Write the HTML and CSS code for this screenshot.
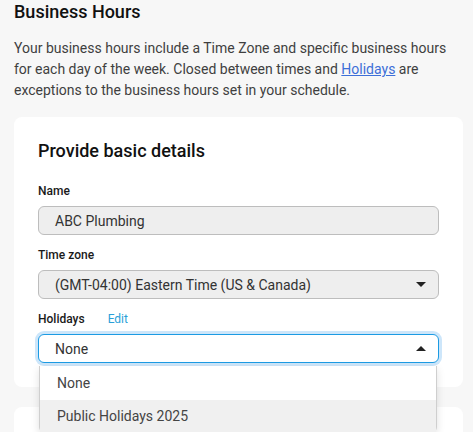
FILE: index.html
```html
<!DOCTYPE html>
<html>
<head>
<meta charset="utf-8">
<link rel="stylesheet" href="styles.css">
</head>
<body>
<div class="page">
  <h1 class="title">Business Hours</h1>
  <p class="intro">Your business hours include a Time Zone and specific business hours for each day of the week. Closed between times and <a href="#" class="link">Holidays</a> are exceptions to the business hours set in your schedule.</p>
  <section class="card">
    <h2 class="card-title">Provide basic details</h2>
    <div class="field">
      <div class="label">Name</div>
      <div class="control input">ABC Plumbing</div>
    </div>
    <div class="field">
      <div class="label">Time zone</div>
      <div class="control select">
        <span>(GMT-04:00) Eastern Time (US &amp; Canada)</span>
        <span class="caret down"></span>
      </div>
    </div>
    <div class="field last">
      <div class="label">Holidays <a href="#" class="edit">Edit</a></div>
      <div class="dropdown">
        <div class="control select open">
          <span>None</span>
          <span class="caret up"></span>
        </div>
        <ul class="menu">
          <li class="option">None</li>
          <li class="option hover">Public Holidays 2025</li>
        </ul>
      </div>
    </div>
  </section>
  <section class="card next"></section>
</div>
</body>
</html>
```

FILE: styles.css
```css
* { box-sizing: border-box; }
html, body { margin: 0; padding: 0; }
body {
  background: #f7f7f7;
  font-family: Roboto, "Noto Sans", Arial, sans-serif;
  color: #333;
  overflow: hidden;
  height: 432px;
}
.page { padding: 0 10px 0 14px; }
.title {
  margin: 0;
  font-size: 18px;
  line-height: 24px;
  font-weight: 500;
  color: #111;
}
.intro {
  margin: 14px 0 16px;
  font-size: 14px;
  line-height: 21px;
  color: #3f3f3f;
}
.link { color: #3d6fd8; text-decoration: underline; }
.card {
  background: #fff;
  border-radius: 8px;
  padding: 22px 24px 24px;
}
.card.next { margin-top: 20px; height: 60px; }
.card-title {
  margin: 0 0 20px;
  font-size: 18px;
  line-height: 24px;
  font-weight: 500;
  color: #111;
}
.field { margin-bottom: 12px; }
.field.last { margin-bottom: 0; }
.label {
  font-size: 12px;
  line-height: 16px;
  font-weight: 500;
  color: #1a1a1a;
  margin-bottom: 7px;
}
.edit {
  color: #2a9fd8;
  text-decoration: none;
  font-weight: 400;
  margin-left: 20px;
}
.control {
  display: flex;
  align-items: center;
  justify-content: space-between;
  height: 29px;
  padding: 0 12px 0 16px;
  border: 1px solid #bdbdbd;
  border-radius: 6px;
  background: #eeeeee;
  font-size: 14px;
  color: #333;
}
.select.open {
  background: #fff;
  border-color: #1c9be3;
  box-shadow: 0 0 0 3px #cde6fa;
}
.caret {
  width: 0;
  height: 0;
  border-left: 5px solid transparent;
  border-right: 5px solid transparent;
}
.caret.down { border-top: 5px solid #222; }
.caret.up { border-bottom: 5px solid #222; }
.dropdown { position: relative; }
.menu {
  position: absolute;
  left: 1px;
  right: 2px;
  top: 32px;
  margin: 0;
  padding: 0;
  list-style: none;
  background: #fff;
  border: 1px solid #cfcfcf;
  border-top: none;
  border-radius: 0 0 6px 6px;
  box-shadow: 0 3px 8px rgba(0,0,0,0.12);
  z-index: 2;
}
.option {
  height: 34px;
  line-height: 34px;
  padding-left: 17px;
  font-size: 14px;
  color: #444;
}
.option.hover { background: #f0f0f0; height: 32px; line-height: 32px; }
```
